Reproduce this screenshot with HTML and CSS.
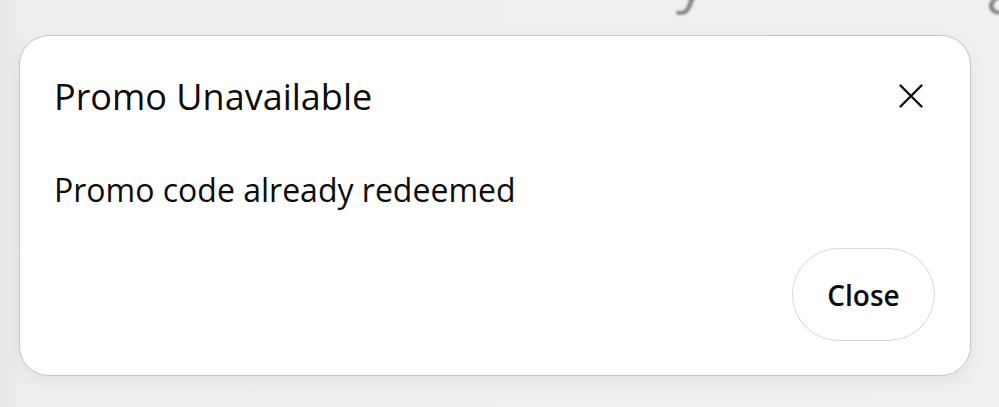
FILE: index.html
```html
<!DOCTYPE html>
<html lang="en">
<head>
<meta charset="utf-8">
<title>Promo Unavailable</title>
<link rel="stylesheet" href="styles.css">
</head>
<body>
<div class="backdrop">
  <div class="backdrop-text"><span class="g1">y</span><span class="g2">g</span></div>
</div>
<div class="dialog" role="dialog" aria-labelledby="dlg-title">
  <div class="dialog-header">
    <h2 class="dialog-title" id="dlg-title">Promo Unavailable</h2>
    <button class="icon-btn" aria-label="Close">
      <svg width="24" height="24" viewBox="0 0 24 24" fill="none" stroke="#111" stroke-width="2.4" stroke-linecap="round"><path d="M1.5 1.5 L22.5 22.5 M22.5 1.5 L1.5 22.5"/></svg>
    </button>
  </div>
  <p class="dialog-body">Promo code already redeemed</p>
  <div class="dialog-footer">
    <button class="btn-close">Close</button>
  </div>
</div>
</body>
</html>
```
FILE: styles.css
```css
html, body {
  margin: 0;
  padding: 0;
}
body {
  width: 999px;
  height: 407px;
  overflow: hidden;
  background: linear-gradient(to right, #e8e8e8 0, #efefef 30px, #f0f0f0 100%);
  font-family: "Open Sans", "Noto Sans", sans-serif;
  color: #111;
  position: relative;
}
.backdrop {
  height: 407px;
}
.backdrop-text {
  display: flex;
  font-size: 60px;
  line-height: 1;
  color: #8a8a8a;
  filter: blur(0.8px);
  margin-top: -52px;
}
.g1 { margin-left: 676px; }
.g2 { margin-left: 282px; }
.dialog {
  position: absolute;
  left: 19px;
  top: 35px;
  width: 952px;
  height: 341px;
  box-sizing: border-box;
  background: #fff;
  border: 1px solid #c6c6c6;
  border-radius: 30px;
  box-shadow: 0 6px 18px rgba(0,0,0,0.06);
  padding: 41px 35px 34px 34px;
  display: flex;
  flex-direction: column;
}
.dialog-header {
  display: flex;
  align-items: center;
  justify-content: space-between;
  height: 40px;
}
.dialog-title {
  margin: 0;
  font-size: 36px;
  line-height: 40px;
  font-weight: 400;
  color: #0c0c0c;
}
.icon-btn {
  width: 48px;
  height: 48px;
  margin-top: -2px;
  padding: 0;
  border: 0;
  background: transparent;
  display: flex;
  align-items: center;
  justify-content: center;
}
.dialog-body {
  margin: 54px 0 0 0;
  font-size: 32px;
  line-height: 38px;
  color: #0c0c0c;
}
.dialog-footer {
  margin-top: auto;
  display: flex;
  justify-content: flex-end;
}
.btn-close {
  width: 143px;
  height: 93px;
  border: 1.5px solid #d6d6d6;
  border-radius: 47px;
  background: #fff;
  font-family: "Open Sans", "Noto Sans", sans-serif;
  font-size: 28px;
  font-weight: 600;
  color: #0c0c0c;
  padding: 0;
}
```
